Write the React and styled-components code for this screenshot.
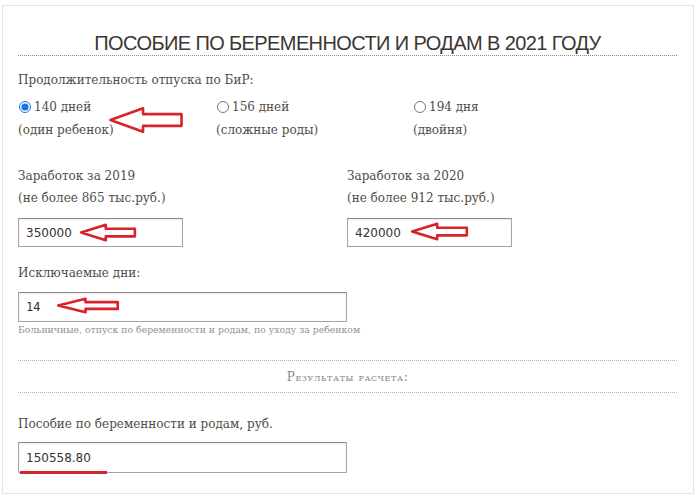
import React from "react";
import styled, { createGlobalStyle } from "styled-components";

const GlobalStyle = createGlobalStyle`
  body {
    margin: 0;
    background: #ffffff;
  }
`;

const Card = styled.div`
  position: relative;
  box-sizing: border-box;
  width: 692px;
  height: 489px;
  margin: 5px 0 0 2px;
  padding: 0 16px 0 15px;
  border: 1px solid #e3e3e3;
  background: #fff;
  font-family: "DejaVu Serif", serif;
  color: #524c46;
`;

const Title = styled.h1`
  margin: 27px 0 0 0;
  padding-bottom: 1px;
  font-family: "Liberation Sans", Arial, sans-serif;
  font-weight: normal;
  font-size: 20px;
  letter-spacing: -0.6px;
  line-height: 21px;
  text-align: center;
  color: #3b3631;
  border-bottom: 1px dotted #8c8c8c;
`;

const Label = styled.div`
  font-size: 12px;
  line-height: 22px;
  margin-top: ${(p) => p.$mt || 0}px;
`;

const RadioGrid = styled.div`
  display: grid;
  grid-template-columns: 198px 197px 198px;
  margin-top: 4px;
`;

const RadioOption = styled.label`
  display: flex;
  flex-direction: column;
  font-size: 12px;
`;

const RadioLine = styled.span`
  display: flex;
  align-items: center;
  height: 24px;
`;

const Radio = styled.input`
  margin: 0 3px 0 1px;
  width: 12px;
  height: 12px;
  accent-color: #1976e0;
`;

const Sub = styled.span`
  line-height: 22px;
`;

const EarnRow = styled.div`
  display: grid;
  grid-template-columns: 329px 329px;
  margin-top: 24px;
`;

const Field = styled.div`
  display: flex;
  flex-direction: column;
`;

const Input = styled.div`
  box-sizing: border-box;
  width: ${(p) => p.$w}px;
  height: ${(p) => p.$h || 29}px;
  margin-top: ${(p) => p.$mt || 9}px;
  padding-left: 7px;
  display: flex;
  align-items: center;
  border: 1px solid #a9a49e;
  border-top-color: #8f8a85;
  box-shadow: inset 0 1px 2px rgba(0, 0, 0, 0.08);
  font-family: ${(p) =>
    p.$mono ? '"DejaVu Sans Mono", monospace' : '"DejaVu Sans", sans-serif'};
  font-size: 12px;
  color: #333;
  background: #fff;
`;

const Hint = styled.div`
  margin-top: 1px;
  font-size: 9.3px;
  line-height: 14px;
  color: #959089;
`;

const ResultHead = styled.div`
  margin-top: 23px;
  border-top: 1px dotted #b5b5b5;
  border-bottom: 1px dotted #b5b5b5;
  height: 31px;
  display: flex;
  align-items: center;
  justify-content: center;
  font-size: 12px;
  font-variant: small-caps;
  letter-spacing: 0.6px;
  color: #8a857f;
`;

const Underline = styled.div`
  position: absolute;
  left: 17px;
  top: 465px;
  width: 87px;
  height: 3px;
  background: #d3242b;
`;

const ArrowSvg = styled.svg`
  position: absolute;
  overflow: visible;
`;

const Arrow = ({ x, y, w, h }) => (
  <ArrowSvg
    style={{ left: x, top: y, width: w, height: h }}
    viewBox="0 0 100 40"
    preserveAspectRatio="none"
  >
    <polygon
      points="2,20 46,2 46,11 98,11 98,29 46,29 46,38"
      fill="none"
      stroke="#d8232a"
      strokeWidth="2.6"
      strokeLinejoin="round"
      vectorEffect="non-scaling-stroke"
    />
  </ArrowSvg>
);

const App = () => {
  return (
    <>
      <GlobalStyle />
      <Card>
        <Title>ПОСОБИЕ ПО БЕРЕМЕННОСТИ И РОДАМ В 2021 ГОДУ</Title>
        <Label $mt={13}>Продолжительность отпуска по БиР:</Label>
        <RadioGrid>
          <RadioOption>
            <RadioLine>
              <Radio type="radio" name="days" defaultChecked />
              140 дней
            </RadioLine>
            <Sub>(один ребенок)</Sub>
          </RadioOption>
          <RadioOption>
            <RadioLine>
              <Radio type="radio" name="days" />
              156 дней
            </RadioLine>
            <Sub>(сложные роды)</Sub>
          </RadioOption>
          <RadioOption>
            <RadioLine>
              <Radio type="radio" name="days" />
              194 дня
            </RadioLine>
            <Sub>(двойня)</Sub>
          </RadioOption>
        </RadioGrid>
        <EarnRow>
          <Field>
            <Label>Заработок за 2019</Label>
            <Label>(не более 865 тыс.руб.)</Label>
            <Input $w={165}>350000</Input>
          </Field>
          <Field>
            <Label>Заработок за 2020</Label>
            <Label>(не более 912 тыс.руб.)</Label>
            <Input $w={165}>420000</Input>
          </Field>
        </EarnRow>
        <Label $mt={15}>Исключаемые дни:</Label>
        <Input $w={329} $h={30} $mt={8} $mono>
          14
        </Input>
        <Hint>Больничные, отпуск по беременности и родам, по уходу за ребенком</Hint>
        <ResultHead>Результаты расчета:</ResultHead>
        <Label $mt={20}>Пособие по беременности и родам, руб.</Label>
        <Input $w={329} $h={31} $mt={7}>
          150558.80
        </Input>
        <Underline />
        <Arrow x={106} y={101} w={74} h={26} />
        <Arrow x={77} y={218} w={56} h={17} />
        <Arrow x={408} y={217} w={57} h={17} />
        <Arrow x={54} y={292} w={62} h={15} />
      </Card>
    </>
  );
};

export default App;
